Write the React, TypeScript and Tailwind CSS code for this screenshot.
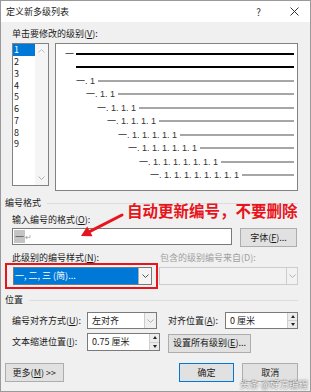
import { ChevronDown } from "lucide-react";

const levels = [1, 2, 3, 4, 5, 6, 7, 8, 9];
const indents = ["pl-[20px]", "pl-[30px]", "pl-[41px]", "pl-[51px]", "pl-[62px]", "pl-[72px]", "pl-[83px]", "pl-[94px]"];

function Chevron({ dim }: { dim?: boolean }) {
  return (
    <svg width="7" height="4" viewBox="0 0 7 4" className="block">
      <path d="M0.5 0.5 L3.5 3.5 L6.5 0.5" fill="none" stroke={dim ? "#b0b0b0" : "#555"} strokeWidth="1" />
    </svg>
  );
}

function Spin({ value, w }: { value: string; w: string }) {
  return (
    <div className={`${w} h-full flex border border-[#7a7a7a] bg-white`}>
      <div className="flex-1 pl-[4px] flex items-center">{value}</div>
      <div className="w-[10px] flex flex-col border-l border-[#d0d0d0]">
        <div className="flex-1 bg-[#ececec] flex items-center justify-center border-b border-[#d0d0d0]">
          <span className="w-0 h-0 border-x-[2.5px] border-x-transparent border-b-[3px] border-b-[#222]" />
        </div>
        <div className="flex-1 bg-[#ececec] flex items-center justify-center">
          <span className="w-0 h-0 border-x-[2.5px] border-x-transparent border-t-[3px] border-t-[#222]" />
        </div>
      </div>
    </div>
  );
}

function Btn({ children, cls }: { children: React.ReactNode; cls: string }) {
  return (
    <div className={`${cls} flex items-center justify-center bg-[#e1e1e1] border border-[#adadad]`}>{children}</div>
  );
}

export default function App() {
  return (
    <div className="relative w-[311px] h-[392px] bg-[#f0f0f0] border border-[#9a9a9a] overflow-hidden flex flex-col text-[9px] leading-[12px] text-[#1a1a1a] font-['Noto_Sans_CJK_SC',sans-serif]">
      {/* title bar */}
      <div className="h-[21px] bg-white flex items-center pl-[5px]">
        <span className="flex-1">定义新多级列表</span>
        <span className="text-[10px] text-[#333] mr-[29px]">?</span>
        <svg width="9" height="9" viewBox="0 0 9 9" className="mr-[11px]">
          <path d="M0.5 0.5 L8.5 8.5 M8.5 0.5 L0.5 8.5" stroke="#333" strokeWidth="1" />
        </svg>
      </div>

      <div className="flex flex-col pl-[11px] pr-[12px]">
        <div className="mt-[6px]">单击要修改的级别(<span className="underline">V</span>):</div>

        <div className="mt-[3px] flex items-start">
          <div className="w-[37px] h-[143px] bg-white border border-[#828282] flex">
            <div className="flex-1 flex flex-col leading-[11.75px] text-[9px]">
              {levels.map((n) => (
                <div key={n} className={n === 1 ? "bg-[#0078d7] text-white pl-[1px] h-[12px] leading-[12px]" : "pl-[1px] h-[11.75px]"}>
                  {n}
                </div>
              ))}
            </div>
            <div className="w-[13px] bg-[#f5f5f5] flex flex-col items-center justify-between py-[5px]">
              <svg width="7" height="4" viewBox="0 0 7 4"><path d="M0.5 3.5 L3.5 0.5 L6.5 3.5" fill="none" stroke="#c0c0c0" /></svg>
              <Chevron dim />
            </div>
          </div>

          <div className="ml-[6px] w-[243px] h-[148px] bg-white border border-[#828282] pt-[3px] pr-[3px] flex flex-col text-[#333] font-['Liberation_Sans','Noto_Sans_CJK_SC',sans-serif] text-[9px]">
            <div className="h-[13.5px] flex items-center pl-[9px]">
              <span>一</span>
              <div className="flex-1 h-[2px] bg-black ml-[2px]" />
            </div>
            <div className="h-[13.5px] flex items-center pl-[20px]">
              <div className="flex-1 h-[2px] bg-black" />
            </div>
            {levels.slice(1).map((n, i) => (
              <div key={n} className={`h-[13.5px] flex items-center ${indents[i]}`}>
                <span className="whitespace-pre">{"一" + ". 1".repeat(n - 1)}</span>
                <div className="flex-1 h-[2px] bg-[#a6a6a6] ml-[3px]" />
              </div>
            ))}
          </div>
        </div>

        <div className="mt-[6px] -ml-[7px] flex items-center">
          <span>编号格式</span>
          <div className="flex-1 h-px bg-[#dcdcdc] ml-[6px]" />
        </div>

        <div className="mt-[5px]">输入编号的格式(<span className="underline">O</span>):</div>
        <div className="mt-[2px] flex items-start">
          <div className="w-[220px] h-[17px] bg-white border border-[#7a7a7a] flex items-center pl-px">
            <span className="bg-[#c4c4c4] text-[#555] h-[13px] leading-[13px] px-px">一</span>
            <span className="text-[#9a9a9a] text-[8px]">↵</span>
          </div>
          <Btn cls="ml-[8px] w-[57px] h-[19px]">
            字体(<span className="underline">F</span>)...
          </Btn>
        </div>

        <div className="mt-[5px] flex">
          <div className="w-[148px]">此级别的编号样式(<span className="underline">N</span>):</div>
          <div className="text-[#a0a0a0]">包含的级别编号来自(D):</div>
        </div>
        <div className="mt-[3px] flex h-[18px]">
          <div className="ml-px w-[139px] h-full flex border border-[#7a7a7a] bg-white">
            <div className="flex-1 bg-[#0078d7] text-white pl-[1px] flex items-center">一, 二, 三 (简)...</div>
            <div className="w-[13px] flex items-center justify-center border-l border-[#adadad] bg-[#f4f4f4]">
              <Chevron />
            </div>
          </div>
          <div className="ml-[7px] w-[139px] h-full flex border border-[#cccccc] bg-[#f2f2f2]">
            <div className="flex-1" />
            <div className="w-[11px] flex items-center justify-center border-l border-[#cccccc]">
              <Chevron dim />
            </div>
          </div>
        </div>

        <div className="mt-[9px] -ml-[7px] flex items-center">
          <span>位置</span>
          <div className="flex-1 h-px bg-[#dcdcdc] ml-[6px]" />
        </div>

        <div className="mt-[6px] h-[17px] flex items-center">
          <div className="w-[75px]">编号对齐方式(<span className="underline">U</span>):</div>
          <div className="w-[70px] h-full flex border border-[#7a7a7a] bg-white">
            <div className="flex-1 pl-[4px] flex items-center">左对齐</div>
            <div className="w-[12px] flex items-center justify-center border-l border-[#cccccc] bg-[#f0f0f0]">
              <Chevron dim />
            </div>
          </div>
          <div className="ml-[11px] w-[57px]">对齐位置(<span className="underline">A</span>):</div>
          <Spin value="0 厘米" w="w-[73px]" />
        </div>

        <div className="mt-[4px] h-[18px] flex items-center">
          <div className="w-[75px]">文本缩进位置(<span className="underline">I</span>):</div>
          <Spin value="0.75 厘米" w="w-[73px]" />
          <Btn cls="ml-[8px] w-[83px] h-[19px] mt-[2px]">
            设置所有级别(<span className="underline">E</span>)...
          </Btn>
        </div>

        <div className="mt-[12px] -ml-[7px] flex h-[19px]">
          <Btn cls="w-[61px] h-full">
            更多(<span className="underline">M</span>) &gt;&gt;
          </Btn>
          <Btn cls="ml-[115px] w-[58px] h-full !border-[#0078d7]">确定</Btn>
          <Btn cls="ml-[8px] w-[58px] h-full">取消</Btn>
        </div>
      </div>

      {/* annotations */}
      <div className="absolute left-[4px] top-[262px] w-[153px] h-[26px] border-2 border-[#e8141b]" />
      <div className="absolute left-[126px] top-[200px] text-[15.5px] leading-[18px] font-bold text-[#e8141b] whitespace-nowrap">
        自动更新编号，不要删除
      </div>
      <svg className="absolute left-[69px] top-[204px]" width="60" height="40" viewBox="0 0 60 40">
        <path d="M52 10 L20 26.3" stroke="#e8141b" strokeWidth="3" strokeLinecap="round" />
        <path d="M11 31 L22.6 31.2 L17.2 21.4 Z" fill="#e8141b" />
      </svg>
      <div className="absolute right-[2px] bottom-[1px] text-[9.5px] leading-[12px] text-white/90 [text-shadow:0_0_2px_rgba(0,0,0,0.9)] whitespace-nowrap">
        头条 @好方编程
      </div>
      <ChevronDown className="hidden" />
    </div>
  );
}
